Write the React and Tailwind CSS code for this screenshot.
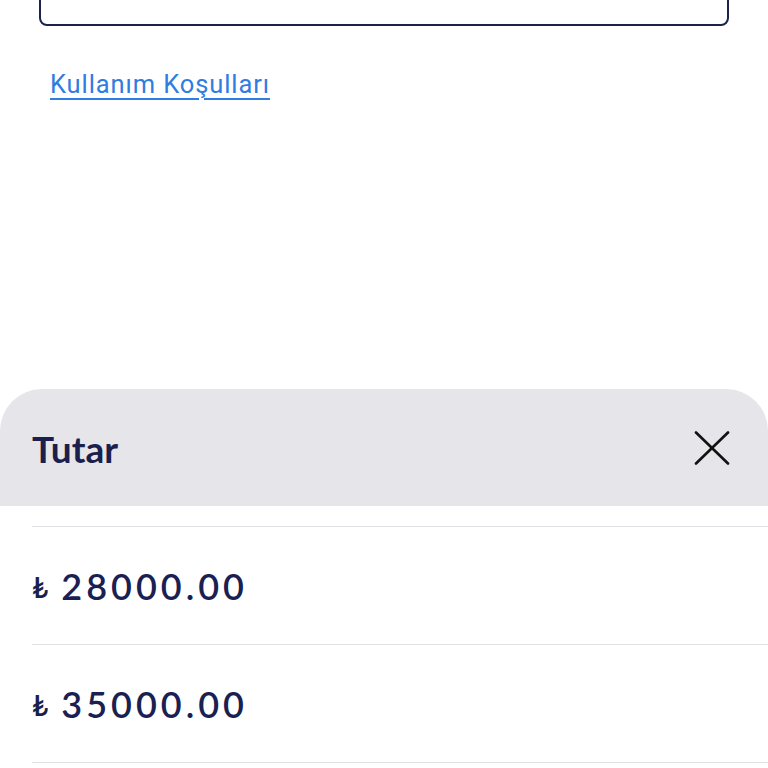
import React from "react";

const amounts = ["28000.00", "35000.00"];

function CloseIcon() {
    return (
        <svg width="36" height="34" viewBox="0 0 36 34" fill="none" stroke="#111" strokeWidth="2.6" strokeLinecap="round">
            <path d="M2 1.5 L34 32.5" />
            <path d="M34 1.5 L2 32.5" />
        </svg>
    );
}

export default function App() {
    return (
        <div className="w-[768px] h-[768px] overflow-hidden bg-white flex flex-col" style={{ fontFamily: "Lato, 'Noto Sans', sans-serif" }}>
            {/* input box cut off at the top */}
            <div className="mx-[39px] -mt-[40px] h-[66px] border-2 border-[#1c2250] rounded-[8px] shrink-0" />

            <a
                href="#"
                className="ml-[50px] mt-[42px] self-start text-[25.5px] leading-[32px] text-[#2f7de0] underline underline-offset-[5px] decoration-[1.5px] shrink-0"
                style={{ fontFamily: "Roboto, 'Liberation Sans', sans-serif", letterSpacing: "0.9px" }}
            >
                Kullanım Koşulları
            </a>

            {/* bottom sheet */}
            <div className="mt-[289px] flex-1 flex flex-col rounded-t-[42px] bg-[#e5e5ea] overflow-hidden">
                <div className="h-[117px] shrink-0 flex items-center justify-between pl-[32px] pr-[38px]">
                    <span className="text-[37px] font-bold text-[#1a1f4e] pt-[2px]">Tutar</span>
                    <CloseIcon />
                </div>
                <div className="flex-1 bg-white pt-[20px]">
                    <div className="ml-[32px] border-t border-[#e2e2e6]">
                        {amounts.map((a) => (
                            <div key={a} className="h-[118px] flex items-center border-b border-[#e2e2e6]">
                                <span className="text-[28px] font-semibold text-[#1a1f4e] mr-[13px] pt-[2px]">₺</span>
                                <span className="text-[36px] font-semibold text-[#1a2052] tracking-[4px]">{a}</span>
                            </div>
                        ))}
                    </div>
                </div>
            </div>
        </div>
    );
}
